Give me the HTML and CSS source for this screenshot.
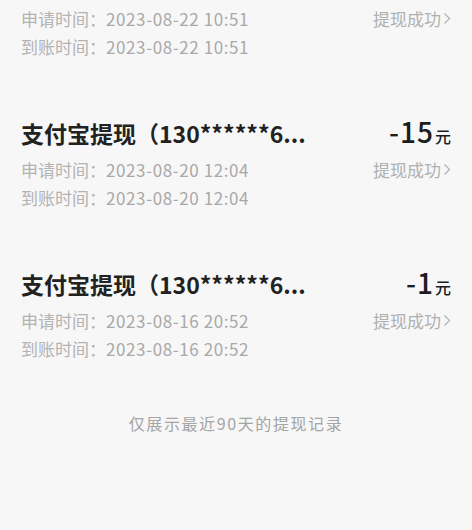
FILE: index.html
```html
<!DOCTYPE html>
<html lang="zh-CN">
<head>
  <meta charset="UTF-8" />
  <title>提现记录</title>
  <link rel="stylesheet" href="styles.css">
</head>
<body>
  <div class="records">
    <!-- scrolled: only the tail of this record is in view -->
    <div class="record">
      <div class="record-meta">
        <span>申请时间：<span class="time">2023-08-22 10:51</span></span>
        <span class="status">提现成功<svg width="8" height="13" viewBox="0 0 8 13"><path d="M1.5 1.5 L6.5 6.5 L1.5 11.5" /></svg></span>
      </div>
      <div class="record-meta">
        <span>到账时间：<span class="time">2023-08-22 10:51</span></span>
      </div>
    </div>

    <div class="record">
      <div class="record-head">
        <span class="record-title">支付宝提现（130******6...</span>
        <span class="amount">-15<small>元</small></span>
      </div>
      <div class="record-meta">
        <span>申请时间：<span class="time">2023-08-20 12:04</span></span>
        <span class="status">提现成功<svg width="8" height="13" viewBox="0 0 8 13"><path d="M1.5 1.5 L6.5 6.5 L1.5 11.5" /></svg></span>
      </div>
      <div class="record-meta">
        <span>到账时间：<span class="time">2023-08-20 12:04</span></span>
      </div>
    </div>

    <div class="record">
      <div class="record-head">
        <span class="record-title">支付宝提现（130******6...</span>
        <span class="amount">-1<small>元</small></span>
      </div>
      <div class="record-meta">
        <span>申请时间：<span class="time">2023-08-16 20:52</span></span>
        <span class="status">提现成功<svg width="8" height="13" viewBox="0 0 8 13"><path d="M1.5 1.5 L6.5 6.5 L1.5 11.5" /></svg></span>
      </div>
      <div class="record-meta">
        <span>到账时间：<span class="time">2023-08-16 20:52</span></span>
      </div>
    </div>
  </div>

  <p class="footnote">仅展示最近90天的提现记录</p>
</body>
</html>
```

FILE: styles.css
```css
body {
  margin: 0;
  background: #f7f7f7;
  font-family: "Noto Sans CJK SC", "Noto Sans", sans-serif;
  color: #222222;
  height: 530px;
  overflow: hidden;
}

.records {
  padding: 4px 21px 0;
}

.record {
  margin-bottom: 57px;
}

.record:last-child {
  margin-bottom: 0;
}

.record-head {
  display: flex;
  justify-content: space-between;
  align-items: baseline;
  height: 28px;
  line-height: 28px;
  margin-bottom: 10px;
}

.record-title {
  font-size: 23px;
  font-weight: bold;
  color: #222222;
}

.amount {
  font-size: 28px;
  font-weight: 500;
  color: #1c1c1c;
  letter-spacing: 1px;
}

.amount small {
  font-size: 16px;
  margin-left: 1px;
  letter-spacing: 0;
}

.record-meta {
  display: flex;
  justify-content: space-between;
  align-items: center;
  height: 28px;
  font-size: 17px;
  color: #b3b3b3;
}

.time {
  color: #a9a9a9;
  letter-spacing: 0.6px;
}

.status {
  display: flex;
  align-items: center;
  gap: 2px;
  color: #b0b0b0;
}

.status svg path {
  fill: none;
  stroke: #b0b0b0;
  stroke-width: 1.2;
}

.footnote {
  margin: 51px 0 0;
  text-align: center;
  font-size: 16px;
  letter-spacing: 1.6px;
  line-height: 20px;
  color: #a5a5a5;
}
```
